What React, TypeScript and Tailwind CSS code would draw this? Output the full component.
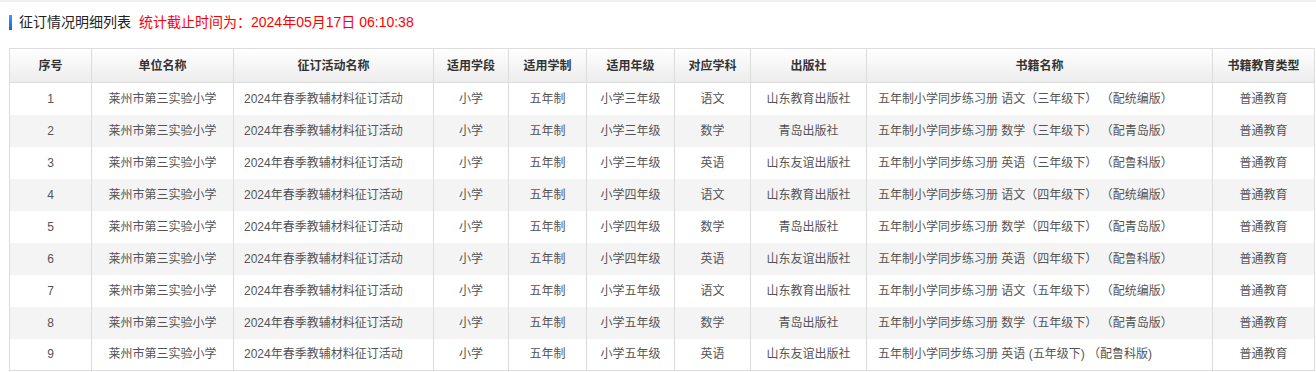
import React from 'react';

const cols = [
    { title: '序号', w: 'w-[82px]', align: 'text-center' },
    { title: '单位名称', w: 'w-[142px]', align: 'text-center' },
    { title: '征订活动名称', w: 'w-[200px]', align: 'text-left pl-[10px]' },
    { title: '适用学段', w: 'w-[75px]', align: 'text-center' },
    { title: '适用学制', w: 'w-[78px]', align: 'text-center' },
    { title: '适用年级', w: 'w-[88px]', align: 'text-center' },
    { title: '对应学科', w: 'w-[76px]', align: 'text-center' },
    { title: '出版社', w: 'w-[116px]', align: 'text-center' },
    { title: '书籍名称', w: 'w-[346px]', align: 'text-left pl-[11px]' },
    { title: '书籍教育类型', w: 'w-[102px]', align: 'text-center' },
];

const grades = ['三', '三', '三', '四', '四', '四', '五', '五', '五'];
const subjects = [
    { s: '语文', p: '山东教育出版社', ed: '（配统编版）' },
    { s: '数学', p: '青岛出版社', ed: '（配青岛版）' },
    { s: '英语', p: '山东友谊出版社', ed: '（配鲁科版）' },
];

const rows = grades.map((g, i) => {
    const sub = subjects[i % 3];
    const book =
        i === 8
            ? `五年制小学同步练习册 ${sub.s} (${g}年级下) （配鲁科版)`
            : `五年制小学同步练习册 ${sub.s}（${g}年级下） ${sub.ed}`;
    return [
        String(i + 1),
        '莱州市第三实验小学',
        '2024年春季教辅材料征订活动',
        '小学',
        '五年制',
        `小学${g}年级`,
        sub.s,
        sub.p,
        book,
        '普通教育',
    ];
});

export default function App() {
    return (
        <div className="w-[1316px] h-[372px] bg-white overflow-hidden font-['Liberation_Sans','Noto_Sans_CJK_SC',sans-serif]">
            <div className="h-[2px] bg-[#f0f0f0]" />
            <div className="flex items-center h-[40px] pl-[9px] pt-[1px]">
                <span className="w-[3px] h-[15px] bg-gradient-to-b from-[#3aa0f5] to-[#1565d8]" />
                <span className="ml-[7px] text-[14px] text-[#222]">征订情况明细列表</span>
                <span className="ml-[8px] text-[14px] text-[#f00]">统计截止时间为：2024年05月17日 06:10:38</span>
            </div>
            <div className="pl-[9px] pt-[6px]">
                <table className="w-[1305px] border-collapse table-fixed text-[12px]">
                    <thead>
                        <tr className="h-[34px] bg-gradient-to-b from-white to-[#ececec]">
                            {cols.map((c) => (
                                <th key={c.title} className={`${c.w} border border-[#dcdcdc] text-center font-bold text-[#333]`}>
                                    {c.title}
                                </th>
                            ))}
                        </tr>
                    </thead>
                    <tbody>
                        {rows.map((r, i) => (
                            <tr key={i} className={`h-[32px] ${i % 2 === 1 ? 'bg-[#f4f4f4]' : 'bg-white'}`}>
                                {r.map((cell, j) => (
                                    <td
                                        key={j}
                                        className={`${cols[j].align} border-x border-[#dcdcdc] text-[#555] whitespace-pre ${i === rows.length - 1 ? 'border-b' : ''}`}
                                    >
                                        {cell}
                                    </td>
                                ))}
                            </tr>
                        ))}
                    </tbody>
                </table>
            </div>
        </div>
    );
}
